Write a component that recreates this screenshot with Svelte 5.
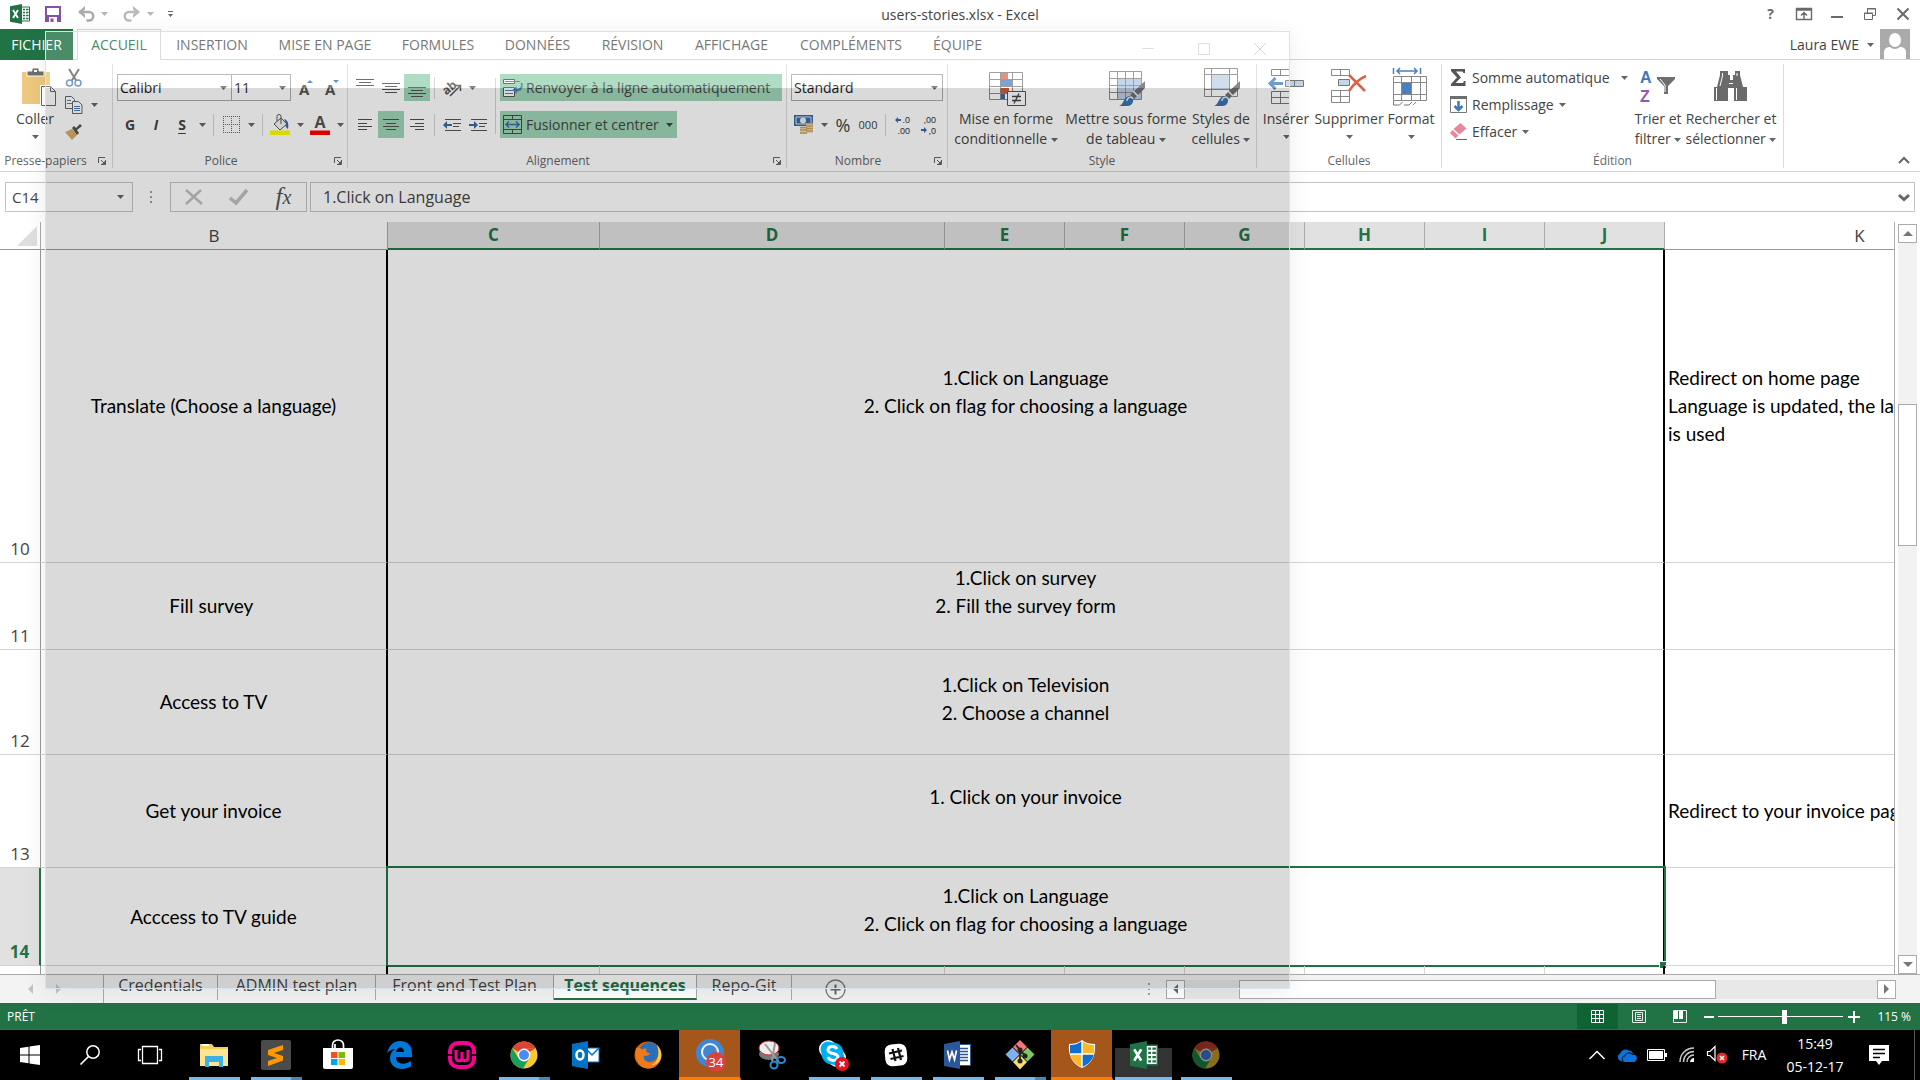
<script>
  const ribbonTabs = ['INSERTION', 'MISE EN PAGE', 'FORMULES', 'DONNÉES', 'RÉVISION', 'AFFICHAGE', 'COMPLÉMENTS', 'ÉQUIPE'];

  const columns = [
    { name: 'B', width: 347 },
    { name: 'C', width: 212, on: true },
    { name: 'D', width: 345, on: true },
    { name: 'E', width: 120, on: true },
    { name: 'F', width: 120, on: true },
    { name: 'G', width: 120, on: true },
    { name: 'H', width: 120, on: true },
    { name: 'I', width: 120, on: true },
    { name: 'J', width: 120, on: true },
    { name: 'K', width: 390 }
  ];

  const rows = [
    { n: 10, height: 313, b: 'Translate (Choose a language)', c: '1.Click on Language\n2. Click on flag for choosing a language\n\u00a0', k: 'Redirect on home page\nLanguage is updated, the language\nis used' },
    { n: 11, height: 87, b: 'Fill survey\u00a0', c: '1.Click on survey\n2. Fill the survey form\n\u00a0', k: '' },
    { n: 12, height: 105, b: 'Access to TV', c: '1.Click on Television\n2. Choose a channel', k: '' },
    { n: 13, height: 113, b: 'Get your invoice', c: '1. Click on your invoice\n\u00a0', k: 'Redirect to your invoice page' },
    { n: 14, height: 98, b: 'Acccess to TV guide', c: '1.Click on Language\n2. Click on flag for choosing a language', k: '', on: true }
  ];

  let fontName = $state('Calibri');
  let fontSize = $state('11');
  let numberFormat = $state('Standard');
  let cellName = $state('C14');
  let formula = $state('1.Click on Language');
  let zoom = $state(53);
</script>

{#snippet caret()}
  <svg class="caret" width="7" height="4" viewBox="0 0 7 4" aria-hidden="true"><path d="M0 0h7L3.5 4z" fill="currentColor" /></svg>
{/snippet}

{#snippet groupLabel(text, launcher)}
  <div class="group-label">
    <span>{text}</span>
    {#if launcher}
      <button class="launcher" aria-label={`Options ${text}`}>
        <svg width="8" height="8" viewBox="0 0 8 8"><path d="M.5 6V.5H7M3 3l3 3M7.500 3v4.500H3" fill="none" stroke="#666" /><path d="M7 4v3H4z" fill="#666" /></svg>
      </button>
    {/if}
  </div>
{/snippet}

{#snippet lines(a, b, c, d)}
  <svg width="18" height="18" viewBox="0 0 18 18" shape-rendering="crispEdges">
    {#each [a, b, c, d] as l}
      {#if l}<path d={`M${l[0]} ${l[2] + 0.5}H${l[1]}`} stroke="#505050" />{/if}
    {/each}
  </svg>
{/snippet}

{#snippet excelLogo(w, h)}
  <svg width={w} height={h} viewBox="0 0 20 20">
    <path d="M11 3h8.500v14H11" fill="#fff" stroke="#207245" />
    <path d="M13 5.500h2M13 8.500h2M13 11.500h2M13 14.500h2M16 5.500h2.500M16 8.500h2.500M16 11.500h2.500M16 14.500h2.500" stroke="#207245" stroke-width="1.600" />
    <path d="M0 2.300 12 0v20L0 17.700z" fill="#207245" />
    <path d="M3 6l5 8M8 6l-5 8" stroke="#fff" stroke-width="1.900" />
  </svg>
{/snippet}

{#snippet brush()}
  <path d="M36 13v7l-11 11-4-4z" fill="#6e6e6e" />
  <path d="M24 23l5 5" stroke="#f4f4f4" stroke-width="1.500" />
  <path d="M10 38c5-1 4-10 11-10 5 2 4 10-3 10z" fill="#3a74b4" />
  <path d="M18 33c0-4 5-5 6-2" stroke="#dce8f5" fill="none" stroke-width="1.500" />
{/snippet}

{#snippet chromeLogo()}
  <svg width="28" height="28" viewBox="0 0 28 28">
    <circle cx="14" cy="14" r="13.500" fill="#fbc62f" />
    <path d="M14 14 2.300 7.200A13.500 13.500 0 0 1 25.700 7.200H14z" fill="#dc4437" />
    <path d="M14 14 25.700 7.200H14z" fill="#dc4437" />
    <path d="M2.300 7.200A13.500 13.500 0 0 0 13 27.500L19.500 17 8.500 17z" fill="#1a9f5a" />
    <circle cx="14" cy="14" r="6.400" fill="#fff" />
    <circle cx="14" cy="14" r="5" fill="#4a8af4" />
  </svg>
{/snippet}

<div class="app">
  <header class="title-bar">
    <div class="quick">
      {@render excelLogo(20, 20)}
      <button aria-label="Enregistrer" class="save">
        <svg width="16" height="16" viewBox="0 0 16 16"><path d="M0 0h16v16H0z" fill="#8552a5" /><path d="M2 2h12v7H2zM4 11h8v5H4z" fill="#fff" /><path d="M5.500 12.500h3V16h-3z" fill="#8552a5" /></svg>
      </button>
      <button aria-label="Annuler" class="undo">
        <svg width="18" height="16" viewBox="0 0 18 16"><path d="M2 6h10a4 4 0 0 1 0 8.500H9.500" fill="none" stroke="#ababab" stroke-width="2.500" /><path d="M8 0 1 6l7 6V8.500L5 6l3-2.500z" fill="#ababab" /></svg>
        <span class="pale">{@render caret()}</span>
      </button>
      <button aria-label="Rétablir" class="undo">
        <svg width="18" height="16" viewBox="0 0 18 16"><path d="M16 6H6a4 4 0 0 0 0 8.500h2.500" fill="none" stroke="#bbb" stroke-width="2.500" /><path d="M10 0l7 6-7 6V8.500L13 6l-3-2.500z" fill="#bbb" /></svg>
        <span class="pale">{@render caret()}</span>
      </button>
      <button aria-label="Personnaliser" class="more"><svg width="5" height="6" viewBox="0 0 5 6"><path d="M0 0h5v1H0zM0 3h5L2.500 6z" fill="#666" /></svg></button>
    </div>
    <h1>users-stories.xlsx - Excel</h1>
    <div class="win-buttons">
      <button aria-label="Aide" class="help">?</button>
      <button aria-label="Options du ruban"><svg width="16" height="12" viewBox="0 0 16 12"><path d="M.5.5h15v11H.5zM0 2h16M8 11V5M5 7.500 8 4.500l3 3" fill="none" stroke="#6a6a6a" stroke-width="1.400" /></svg></button>
      <button aria-label="Réduire"><svg width="12" height="12" viewBox="0 0 12 12"><path d="M0 8h12v2H0z" fill="#6a6a6a" /></svg></button>
      <button aria-label="Restaurer"><svg width="12" height="12" viewBox="0 0 12 12"><path d="M.5 5.500h8v6h-8zM0 5h9M3.500 5V.500h8v7H9M3 1h9" fill="none" stroke="#6a6a6a" /></svg></button>
      <button aria-label="Fermer"><svg width="12" height="12" viewBox="0 0 12 12"><path d="M.5.500l11 11M11.500.500l-11 11" stroke="#6a6a6a" stroke-width="2" /></svg></button>
    </div>
  </header>

  <nav class="tabs" aria-label="Ruban">
    <button class="file">FICHIER</button>
    <button class="active">ACCUEIL</button>
    {#each ribbonTabs as t}<button>{t}</button>{/each}
    <div class="user">
      <button>Laura EWE {@render caret()}</button>
      <svg width="30" height="30" viewBox="0 0 30 30"><path d="M0 0h30v30H0z" fill="#aaa" /><ellipse cx="15" cy="11" rx="6" ry="7" fill="#fff" /><path d="M4 30v-6c0-4 2-6 6-6 3 2.500 7 2.500 10 0 4 0 6 2 6 6v6z" fill="#fff" /></svg>
    </div>
  </nav>

  <section class="ribbon">
    <div class="group clipboard">
      <div class="group-body">
        <button class="big paste">
          <svg width="36" height="40" viewBox="0 0 36 40"><path d="M0 4h28v32H0z" fill="#edc87e" /><path d="M5 8V3h5V0h7v3h5v5z" fill="#6e6e6e" stroke="#fff" /><path d="M12 2h3v2h-3z" fill="#fff" /><path d="M18 17h11l6 6v15H18z" fill="#fff" /><path d="M19.500 18.500h9l5 5v14h-14zM28.500 18.500v5h5" fill="#fff" stroke="#666" /></svg>
          <span>Coller</span>{@render caret()}
        </button>
        <div class="stack icons">
          <button aria-label="Couper"><svg width="18" height="18" viewBox="0 0 18 18"><path d="M4 0l7.500 12M14 0 6.500 12" stroke="#6a6a6a" stroke-width="2" /><circle cx="4.500" cy="14" r="3" fill="none" stroke="#5a86bd" stroke-width="1.500" /><circle cx="13" cy="14" r="3" fill="none" stroke="#5a86bd" stroke-width="1.500" /></svg></button>
          <button aria-label="Copier"><svg width="18" height="18" viewBox="0 0 18 18"><path d="M.500.500h6l3 3v9h-9z" fill="#fff" stroke="#666" /><path d="M2 4.500h4M2 7.500h5" stroke="#4a7cb8" /><path d="M7.500 5.500h6l3.500 3.500v8.500H7.500z" fill="#fff" stroke="#666" /><path d="M9 10.500h6M9 12.500h6M9 14.500h6" stroke="#4a7cb8" /></svg>{@render caret()}</button>
          <button aria-label="Reproduire la mise en forme"><svg width="18" height="16" viewBox="0 0 18 16"><path d="M0 8l7-3 5 6-5 5z" fill="#d6ac66" /><path d="M7 4l5 7 2-2-2-3 5-4-2-2-4 4-2-2z" fill="#555" /></svg></button>
        </div>
      </div>
      {@render groupLabel('Presse-papiers', true)}
    </div>

    <div class="group font">
      <div class="group-body rows">
        <div class="tool-row">
          <label class="combo name"><select aria-label="Police" bind:value={fontName}><option>Calibri</option><option>Arial</option></select>{@render caret()}</label>
          <label class="combo size"><select aria-label="Taille" bind:value={fontSize}><option>11</option><option>12</option></select>{@render caret()}</label>
          <button class="tool grow" aria-label="Agrandir la police"><svg width="14" height="16" viewBox="0 0 14 16"><text x="0" y="15" class="glyph">A</text><path d="M8 3l3-3 3 3z" fill="#4a7cb8" /></svg></button>
          <button class="tool" aria-label="Réduire la police"><svg width="14" height="16" viewBox="0 0 14 16"><text x="0" y="15" class="glyph">A</text><path d="M8 0h6l-3 3z" fill="#4a7cb8" /></svg></button>
        </div>
        <div class="tool-row">
          <button class="tool b">G</button>
          <button class="tool i">I</button>
          <button class="tool u">S</button>
          <button class="drop" aria-label="Soulignement">{@render caret()}</button>
          <i class="sep"></i>
          <button class="tool" aria-label="Bordures"><svg width="17" height="17" viewBox="0 0 17 17"><path d="M0 .5h17M0 8.500h17M.5 0v16M8.500 0v16M16.500 0v16" stroke="#666" stroke-dasharray="1 1" /><path d="M0 16.500h17" stroke="#666" stroke-dasharray="1 1" /></svg></button>
          <button class="drop" aria-label="Choix de bordures">{@render caret()}</button>
          <i class="sep"></i>
          <button class="tool" aria-label="Remplissage"><svg width="20" height="20" viewBox="0 0 20 20"><path d="M4 9l7-6 6 6-7 6z" fill="#f5f5f5" stroke="#555" /><path d="M7 6V1.500a2 2 0 0 1 4 0V9" fill="none" stroke="#555" /><path d="M14 4c4 1 5 5 4 10-2-1-3-3-2-6z" fill="#3a6ba8" /><path d="M0 15.500h20v4.500H0z" fill="#ff0" /></svg></button>
          <button class="drop" aria-label="Couleurs de remplissage">{@render caret()}</button>
          <button class="tool" aria-label="Couleur de police"><svg width="20" height="20" viewBox="0 0 20 20"><text x="10" y="13" text-anchor="middle" class="glyph big-a">A</text><path d="M0 15.500h20v4.500H0z" fill="#f00" /></svg></button>
          <button class="drop" aria-label="Couleurs de police">{@render caret()}</button>
        </div>
      </div>
      {@render groupLabel('Police', true)}
    </div>

    <div class="group align">
      <div class="group-body">
        <div class="rows">
          <div class="tool-row">
            <button class="tool" aria-label="Aligner en haut">{@render lines([0, 18, 0], [3, 15, 3], [0, 18, 6], null)}</button>
            <button class="tool" aria-label="Aligner au centre">{@render lines([0, 18, 4], [3, 15, 7], [0, 18, 10], [3, 15, 13])}</button>
            <button class="tool pressed" aria-label="Aligner en bas">{@render lines([0, 18, 8], [3, 15, 11], [0, 18, 14], [3, 15, 17])}</button>
            <i class="sep"></i>
            <button class="tool" aria-label="Orientation"><svg width="20" height="18" viewBox="0 0 20 18"><text x="0" y="13" class="glyph ab" transform="rotate(-40 7 9)">ab</text><path d="M8 17 18 7M13 6.500h5.500V12" fill="none" stroke="#555" stroke-width="1.500" /></svg></button>
            <button class="drop" aria-label="Orientations">{@render caret()}</button>
          </div>
          <div class="tool-row">
            <button class="tool" aria-label="Aligner à gauche">{@render lines([2, 16, 3], [2, 11, 7], [2, 16, 10], [2, 11, 13])}</button>
            <button class="tool pressed" aria-label="Centrer">{@render lines([1, 17, 3], [4, 14, 7], [1, 17, 10], [4, 14, 13])}</button>
            <button class="tool" aria-label="Aligner à droite">{@render lines([2, 16, 3], [7, 16, 7], [2, 16, 10], [7, 16, 13])}</button>
            <i class="sep"></i>
            <button class="tool" aria-label="Diminuer le retrait"><svg width="18" height="12" viewBox="0 0 18 12"><path d="M2 .5h16M10 4.500h8M10 7.500h6M2 11.500h16" stroke="#555" /><path d="M9 5H4V2L0 6l4 4V7h5z" fill="#3a6ba8" /></svg></button>
            <button class="tool" aria-label="Augmenter le retrait"><svg width="18" height="12" viewBox="0 0 18 12"><path d="M2 .5h16M10 4.500h8M10 7.500h6M2 11.500h16" stroke="#555" /><path d="M0 5h5V2l4 4-4 4V7H0z" fill="#3a6ba8" /></svg></button>
          </div>
        </div>
        <i class="sep tall"></i>
        <div class="rows">
          <button class="wrap pressed"><svg width="20" height="18" viewBox="0 0 20 18"><path d="M.500.500h11v4H.500zM.500 8.500h11v9H.500z" fill="#fff" stroke="#555" /><path d="M2 2.500h15M2 11.500h8M2 14.500h8" stroke="#4a7cb8" /><path d="M17.500 4c1.500 4-1 6-4 6V7l-4 4 4 4v-2.500c5 0 7-4 6-8.500z" fill="#4a7cb8" /></svg>Renvoyer à la ligne automatiquement</button>
          <button class="merge pressed"><svg width="20" height="20" viewBox="0 0 20 20"><path d="M.500.500h18v18H.500zM0 4.500h19M0 14.500h19M9.500 0v4M9.500 15v4" fill="none" stroke="#4d4d4d" /><path d="M4 9.500h11M6 6.500l-3 3 3 3M13 6.500l3 3-3 3" fill="none" stroke="#3a6ba8" stroke-width="1.600" /></svg>Fusionner et centrer{@render caret()}</button>
        </div>
      </div>
      {@render groupLabel('Alignement', true)}
    </div>

    <div class="group number">
      <div class="group-body rows">
        <label class="combo format"><select aria-label="Format de nombre" bind:value={numberFormat}><option>Standard</option><option>Nombre</option></select>{@render caret()}</label>
        <div class="tool-row">
          <button class="tool" aria-label="Format comptabilité"><svg width="20" height="19" viewBox="0 0 20 19"><path d="M0 0h19v11H0z" fill="#3a6ba8" /><path d="M2 2h15v7H2z" fill="none" stroke="#dfe8f3" /><circle cx="9" cy="5.500" r="3" fill="#e8eef6" /><path d="M12 8h7v10h-7zM6 12h7v7H6z" fill="#e9e0cf" /><path d="M12 8.500h7M12 11h7M12 13.500h7M12 16h7M6 12.500h7M6 15h7M6 18h7" stroke="#cfa35a" stroke-width="1.600" /></svg></button>
          <button class="drop" aria-label="Devises">{@render caret()}</button>
          <button class="tool pct">%</button>
          <button class="tool tiny">000</button>
          <i class="sep"></i>
          <button class="tool" aria-label="Ajouter une décimale"><svg width="16" height="18" viewBox="0 0 16 18"><path d="M6 3H3V1L0 4l3 3V5h3z" fill="#3a6ba8" /><text x="15" y="7" text-anchor="end" class="digits">.0</text><text x="15" y="18" text-anchor="end" class="digits">.00</text></svg></button>
          <button class="tool" aria-label="Réduire les décimales"><svg width="16" height="18" viewBox="0 0 16 18"><path d="M0 13h3v-2l3 3-3 3v-2H0z" fill="#3a6ba8" /><text x="15" y="7" text-anchor="end" class="digits">,00</text><text x="15" y="18" text-anchor="end" class="digits">,0</text></svg></button>
        </div>
      </div>
      {@render groupLabel('Nombre', true)}
    </div>

    <div class="group style">
      <div class="group-body">
        <button class="big cond">
          <svg width="38" height="40" viewBox="0 0 38 40"><path d="M.500 4.500h33v27h-33z" fill="#fff" /><path d="M11 5h8v6h-8z" fill="#e07b5d" /><path d="M11 12h12v6H11z" fill="#5f8fc8" /><path d="M11 20h9v6h-9z" fill="#cf5b3b" /><path d="M11 26h5v6h-5z" fill="#3a6ba8" /><path d="M.500 4.500h33v27h-33zM11.500 4v28M23.500 4v28M0 11.500h34M0 18.500h34M0 25.500h34" fill="none" stroke="#8a8a8a" /><path d="M18.500 23.500h18v14h-18z" fill="#fff" stroke="#555" /><path d="M23 28.500h9M23 32.500h9M30 25.500l-5 10" stroke="#444" stroke-width="1.300" /></svg>
          <span>Mise en forme</span><span>conditionnelle {@render caret()}</span>
        </button>
        <button class="big table">
          <svg width="38" height="40" viewBox="0 0 38 40"><path d="M.500 3.500h32v28h-32z" fill="#fff" /><path d="M8 10h24v21H8z" fill="#b9cde6" /><path d="M.500 3.500h32v28h-32zM8.500 3v28M16.500 3v28M24.500 3v28M0 10.500h33M0 17.500h33M0 24.500h33" fill="none" stroke="#8a8a8a" />{@render brush()}</svg>
          <span>Mettre sous forme</span><span>de tableau {@render caret()}</span>
        </button>
        <button class="big cell-styles">
          <svg width="38" height="40" viewBox="0 0 38 40"><path d="M.500.500h33v28h-33z" fill="#fff" /><path d="M8 7h18v14H8z" fill="#c6d6ea" /><path d="M.500.500h33v28h-33zM7.500 0v28M25.500 0v28M0 6.500h33M0 21.500h33" fill="none" stroke="#8a8a8a" />{@render brush()}</svg>
          <span>Styles de</span><span>cellules {@render caret()}</span>
        </button>
      </div>
      {@render groupLabel('Style', false)}
    </div>

    <div class="group cells">
      <div class="group-body">
        <button class="big insert">
          <svg width="36" height="40" viewBox="0 0 36 40"><path d="M3.500 1.500h18v6h-18zM12.500 1.500v6M3.500 23.500h18v12h-18zM12.500 23.500v12M3.500 29.500h18" fill="#fff" stroke="#777" /><path d="M17.500 12.500h18v6h-18zM26.500 12v7" fill="#c6d6ea" stroke="#777" /><path d="M15 15.500H2M7.500 10 2 15.500 7.500 21" fill="none" stroke="#4f86c6" stroke-width="3" /></svg>
          <span>Insérer</span>{@render caret()}
        </button>
        <button class="big delete">
          <svg width="36" height="40" viewBox="0 0 36 40"><path d="M.500 1.500h18v6H.500zM9.500 1.500v6M.500 22.500h18v12H.500zM9.500 22.500v12M.500 28.500h18" fill="#fff" stroke="#888" /><path d="M7.500 11.500h11v6h-11z" fill="#c6d6ea" stroke="#777" /><path d="M18 7l16 16M35 8c-7 3-13 9-17 15" stroke="#dc6141" stroke-width="2.500" fill="none" /></svg>
          <span>Supprimer</span>{@render caret()}
        </button>
        <button class="big fmt">
          <svg width="36" height="40" viewBox="0 0 36 40"><path d="M.500 0v6M27.500 0v6M4 3h20M7 0 4 3l3 3M21 0l3 3-3 3" fill="none" stroke="#4a7fbf" stroke-width="1.500" /><path d="M.500 8.500h33v24h-33zM8.500 8v24M18.500 8v24M27.500 8v24M0 14.500h33M0 26.500h33" fill="#fff" stroke="#888" /><path d="M9 15h9v11H9z" fill="#4a7fbf" /><path d="M.500 33v4h6l3-3M11 37h5l3-3M20 37l3-3" fill="none" stroke="#777" /></svg>
          <span>Format</span>{@render caret()}
        </button>
      </div>
      {@render groupLabel('Cellules', false)}
    </div>

    <div class="group edit">
      <div class="group-body">
        <div class="stack texts">
          <button class="sum"><svg width="17" height="17" viewBox="0 0 17 17"><path d="M1 0h14v4h-1.500L12.500 2.500H6L11 8.500 5.500 14h7.500l1-2h1.500v5H1v-2l6-6.500L1 2z" fill="#555" /></svg><span>Somme automatique</span>{@render caret()}</button>
          <button><svg width="17" height="17" viewBox="0 0 17 17"><path d="M.500.500h16v16H.500z" fill="#fff" stroke="#777" /><path d="M0 0h17v3H0z" fill="#6e6e6e" /><path d="M8.500 5v9M4.500 10l4 4 4-4" fill="none" stroke="#3f78ba" stroke-width="2.500" /></svg><span>Remplissage</span>{@render caret()}</button>
          <button><svg width="17" height="17" viewBox="0 0 17 17"><path d="M10.500 0l6 5.500-7 6-6-5.500z" fill="#e8879a" /><path d="M2.500 7l6 5.500-3 3L0 10z" fill="#e8879a" /><path d="M6 16.500h11" stroke="#666" /></svg><span>Effacer</span>{@render caret()}</button>
        </div>
        <button class="big sort">
          <svg width="36" height="40" viewBox="0 0 36 40"><text x="0" y="15" class="az a">A</text><text x="0" y="34" class="az z">Z</text><path d="M17 9h18v2l-7 7v8h-4v-8l-7-7z" fill="#6e6e6e" /><path d="M20 11l5 6v7" stroke="#fff" fill="none" /></svg>
          <span>Trier et</span><span>filtrer {@render caret()}</span>
        </button>
        <button class="big find">
          <svg width="36" height="40" viewBox="0 0 36 40"><path d="M10 3h5v4h2v5h3V7h2V3h5v4l3 12h4v14H21V20h-6v13H1V19h3L7 7V3z" fill="#6a6a6a" /><path d="M16 15.500h4M9.500 5v3L7 18M24 5v3M3.500 20v12M23.500 20v12" stroke="#fff" fill="none" /></svg>
          <span>Rechercher et</span><span>sélectionner {@render caret()}</span>
        </button>
      </div>
      {@render groupLabel('Édition', false)}
    </div>
    <button class="collapse" aria-label="Réduire le ruban"><svg width="12" height="8" viewBox="0 0 12 8"><path d="M1 7l5-5 5 5" fill="none" stroke="#666" stroke-width="2" /></svg></button>
  </section>

  <section class="formula-bar">
    <label class="name-box"><input aria-label="Zone Nom" bind:value={cellName} />{@render caret()}</label>
    <i class="dots"></i>
    <div class="fx-box">
      <button aria-label="Annuler la saisie"><svg width="18" height="16" viewBox="0 0 18 16"><path d="M1 1l16 14M16 1 1 15" stroke="#c0c0c0" stroke-width="2.500" /></svg></button>
      <button aria-label="Entrer"><svg width="19" height="16" viewBox="0 0 19 16"><path d="M1 9l6 5L18 1" fill="none" stroke="#c0c0c0" stroke-width="3.500" /></svg></button>
      <button class="fx" aria-label="Insérer une fonction"><i>f</i><i class="x">x</i></button>
    </div>
    <label class="formula"><input aria-label="Barre de formule" bind:value={formula} /><svg width="12" height="9" viewBox="0 0 12 9"><path d="M1 2l5 4.500L11 2" fill="none" stroke="#666" stroke-width="3" /></svg></label>
  </section>

  <main class="sheet">
    <div class="grid-view">
      <table>
        <colgroup>
          <col class="row-head-col" />
          {#each columns as c}<col style:width={`${c.width}px`} />{/each}
        </colgroup>
        <thead>
          <tr>
            <th class="corner"><svg width="20" height="20" viewBox="0 0 20 20"><path d="M20 0v20H0z" fill="#dfdfdf" /></svg></th>
            {#each columns as c}<th scope="col" class:on={c.on}>{c.name}</th>{/each}
          </tr>
        </thead>
        <tbody>
          {#each rows as r}
            <tr style:height={`${r.height}px`}>
              <th scope="row" class:on={r.on}>{r.n}</th>
              <td class="left">{r.b}</td>
              <td class="merged" class:selected={r.on} colspan="8">{r.c}</td>
              <td class="result">{r.k}</td>
            </tr>
          {/each}
          <tr class="next">
            <th scope="row"></th>
            <td class="left"></td>
            <td></td><td></td><td></td><td></td><td></td><td></td><td></td><td class="edge"></td>
            <td></td>
          </tr>
        </tbody>
      </table>
    </div>
    <div class="v-scroll">
      <button aria-label="Défiler vers le haut"><svg width="10" height="5" viewBox="0 0 10 5"><path d="M5 0l5 5H0z" fill="#777" /></svg></button>
      <div class="v-track"><div class="v-thumb"></div></div>
      <button aria-label="Défiler vers le bas"><svg width="10" height="5" viewBox="0 0 10 5"><path d="M0 0h10L5 5z" fill="#777" /></svg></button>
    </div>
  </main>

  <nav class="sheet-tabs" aria-label="Feuilles">
    <div class="arrows">
      <svg width="5" height="10" viewBox="0 0 5 10"><path d="M5 0v10L0 5z" fill="#c4c4c4" /></svg>
      <svg width="5" height="10" viewBox="0 0 5 10"><path d="M0 0v10l5-5z" fill="#c4c4c4" /></svg>
    </div>
    <button class="s1">Credentials</button>
    <button class="s2">ADMIN test plan</button>
    <button class="s3">Front end Test Plan</button>
    <button class="s4 current">Test sequences</button>
    <button class="s5">Repo-Git</button>
    <button class="add" aria-label="Nouvelle feuille"><svg width="21" height="21" viewBox="0 0 21 21"><circle cx="10.500" cy="10.500" r="9.500" fill="none" stroke="#777" stroke-width="1.300" /><path d="M10.500 5.500v10M5.500 10.500h10" stroke="#666" stroke-width="2" /></svg></button>
    <i class="dots"></i>
    <div class="h-scroll">
      <button aria-label="Défiler à gauche"><svg width="5" height="10" viewBox="0 0 5 10"><path d="M5 0v10L0 5z" fill="#666" /></svg></button>
      <div class="h-track"><div class="h-thumb"></div></div>
      <button aria-label="Défiler à droite"><svg width="5" height="10" viewBox="0 0 5 10"><path d="M0 0v10l5-5z" fill="#777" /></svg></button>
    </div>
  </nav>

  <footer class="status">
    <span class="ready">PRÊT</span>
    <button class="view current-view" aria-label="Normal"><svg width="13" height="13" viewBox="0 0 13 13"><path d="M.500.500h12v12H.500zM4.500 0v13M8.500 0v13M0 4.500h13M0 8.500h13" fill="none" stroke="#fff" /></svg></button>
    <button class="view" aria-label="Mise en page"><svg width="14" height="13" viewBox="0 0 14 13"><path d="M.500.500h13v12H.500zM3.500 2.500h7v8h-7zM5 4.500h4M5 6.500h4M5 8.500h4" fill="none" stroke="#e2efe7" /></svg></button>
    <button class="view" aria-label="Avec sauts de page"><svg width="14" height="13" viewBox="0 0 14 13"><path d="M.500.500h13v12H.500z" fill="none" stroke="#e2efe7" /><path d="M1 1h4v8H1zM6 1h4v8H6z" fill="#fff" /></svg></button>
    <button class="zoom-btn" aria-label="Zoom arrière"><svg width="10" height="10" viewBox="0 0 10 10"><path d="M0 4h10v2H0z" fill="#fff" /></svg></button>
    <input type="range" min="0" max="100" aria-label="Zoom" bind:value={zoom} />
    <button class="zoom-btn" aria-label="Zoom avant"><svg width="12" height="12" viewBox="0 0 12 12"><path d="M0 5h12v2H0zM5 0h2v12H5z" fill="#fff" /></svg></button>
    <span class="percent">115 %</span>
  </footer>

  <footer class="taskbar">
    <button class="sys" aria-label="Démarrer"><svg width="20" height="20" viewBox="0 0 20 20"><path d="M0 3l8.500-1.200v7.700H0zM9.500 1.600 20 0v9.500H9.500zM0 10.500h8.500v7.700L0 17zM9.500 10.500H20V20L9.500 18.400z" fill="#fff" /></svg></button>
    <button class="sys" aria-label="Rechercher"><svg width="20" height="20" viewBox="0 0 20 20"><circle cx="13" cy="7" r="6.200" fill="none" stroke="#fff" stroke-width="1.500" /><path d="M8.500 11.500.500 19.500" stroke="#fff" stroke-width="1.700" /></svg></button>
    <button class="sys" aria-label="Vue des tâches"><svg width="24" height="18" viewBox="0 0 24 18"><path d="M4.500.500h15v17h-15zM3 3.500H.500v11H3M21 3.500h2.500v11H21" fill="none" stroke="#fff" stroke-width="1.300" /></svg></button>
    <div class="apps">
      <button class="run" aria-label="Explorateur"><svg width="28" height="24" viewBox="0 0 28 24"><path d="M0 1h12l2 3h14v19H0z" fill="#f5cd5b" /><path d="M0 6h28v17H0z" fill="#fde493" /><path d="M2 1h7v2H2z" fill="#fff" /><path d="M5 13h18v11h-4v-5h-10v5H5z" fill="#3bb0e5" /></svg></button>
      <button class="run more-than-one" aria-label="Sublime Text"><svg width="30" height="30" viewBox="0 0 30 30"><rect width="30" height="30" rx="2" fill="#4b4b4b" /><path d="M7 10l15-5v5l-9 3 9 3v4.500L7 26v-5l9-3-9-3z" fill="#ff9800" /></svg></button>
      <button aria-label="Store"><svg width="30" height="30" viewBox="0 0 30 30"><path d="M9.500 9V5a5.500 5 0 0 1 11 0v4M12 8V4" fill="none" stroke="#fff" stroke-width="1.700" /><path d="M0 8h30v19a2 2 0 0 1-2 2H2a2 2 0 0 1-2-2z" fill="#fff" /><path d="M8 12h6.500v6H8z" fill="#f25022" /><path d="M15.500 12H22v6h-6.500z" fill="#7fba00" /><path d="M8 19h6.500v6H8z" fill="#00a4ef" /><path d="M15.500 19H22v6h-6.500z" fill="#ffb900" /></svg></button>
      <button aria-label="Edge"><svg width="26" height="28" viewBox="0 0 26 28"><path d="M0 12C2 4 7 0 13 0c8 0 12 5 12 12v4H9c0 8 9 8 15 4v5.500C14 31 3 27 3 17c0-4 2-7 5-9-3 0-6 2-8 4zm9-1h8c0-6-7-6-8 0z" fill="#0078d7" /></svg></button>
      <button aria-label="Wamp"><svg width="28" height="28" viewBox="0 0 28 28"><rect x="2" y="2" width="24" height="24" rx="8" fill="none" stroke="#f90093" stroke-width="4" /><path d="M0 14h28" stroke="#000" stroke-width="1.500" /><path d="M8 9v7c0 5 6 5 6 0v-5 5c0 5 6 5 6 0V9" fill="none" stroke="#f90093" stroke-width="3" /></svg></button>
      <button class="run more-than-one" aria-label="Chrome">{@render chromeLogo()}</button>
      <button aria-label="Outlook"><svg width="28" height="28" viewBox="0 0 28 28"><path d="M14 7h13v14H14z" fill="#fff" stroke="#0072c6" /><path d="M14 8l6 6 7-7" fill="none" stroke="#0072c6" stroke-width="1.500" /><path d="M0 3 16 0v28L0 25z" fill="#0072c6" /><ellipse cx="8" cy="14" rx="3.500" ry="4.500" fill="none" stroke="#fff" stroke-width="2.500" /></svg></button>
      <button aria-label="Firefox"><svg width="28" height="28" viewBox="0 0 28 28"><circle cx="14" cy="14" r="13.500" fill="#e66000" /><circle cx="15" cy="11" r="10" fill="#2a6fb8" /><path d="M2 7C0 18 5 27 14 27.500c9 0 14-8 13-16-1 6-5 10-10 10-6 0-8-4-7-7 2 1 5 0 6-2-4-1-5-3-3-5-3 0-4 0-5 1-1-2-4-2-6-1.500z" fill="#ee7a1c" /><path d="M23 4c4 4 5 9 4 13-2 5-5 7-9 7 6-4 8-11 5-20z" fill="#ffcb3a" /></svg></button>
      <button class="alert" aria-label="Messagerie"><svg width="28" height="30" viewBox="0 0 28 30"><circle cx="14" cy="14" r="14" fill="#3f87d3" /><circle cx="14" cy="13" r="8" fill="none" stroke="#eaf2fb" stroke-width="2" /></svg><span class="count">34</span></button>
      <button aria-label="Outil Capture"><svg width="28" height="30" viewBox="0 0 28 30"><ellipse cx="11" cy="14" rx="10" ry="6" fill="#777" /><ellipse cx="11" cy="8" rx="10" ry="7" fill="#eee" stroke="#c33" /><path d="M7 4l14 18M17 3l-3 18" stroke="#999" stroke-width="2" /><circle cx="16" cy="25" r="3.500" fill="none" stroke="#2e8ad0" stroke-width="2" /><ellipse cx="23" cy="20" rx="4" ry="3" fill="none" stroke="#2e8ad0" stroke-width="2" /></svg></button>
      <button class="run" aria-label="Skype"><svg width="30" height="31" viewBox="0 0 30 31"><circle cx="9" cy="9" r="9" fill="#fff" /><circle cx="18" cy="18" r="9" fill="#fff" /><circle cx="9" cy="9" r="7.500" fill="#00aff0" /><circle cx="18" cy="18" r="7.500" fill="#00aff0" /><circle cx="13.500" cy="13.500" r="11" fill="#00aff0" /><path d="M18 9c-2-4-9-3-9 1 0 5 10 2 10 7 0 4-8 5-10 0" fill="none" stroke="#fff" stroke-width="3" /><circle cx="23" cy="24" r="7" fill="#e81123" /><path d="M20.500 21.500l5 5M25.500 21.500l-5 5" stroke="#fff" stroke-width="1.800" /></svg></button>
      <button class="run" aria-label="Slack"><svg width="24" height="24" viewBox="0 0 24 24"><rect x="1" y="1" width="22" height="22" rx="7" fill="#fff" transform="rotate(-5 12 12)" /><path d="M8.500 6l3 12M14 5l3 12M5 10.500 18 7.500M6.500 16l13-3" stroke="#111" stroke-width="2.200" /></svg></button>
      <button class="run" aria-label="Word"><svg width="28" height="28" viewBox="0 0 28 28"><path d="M14 3.500h12.500v21H14z" fill="#fff" stroke="#2b579a" /><path d="M15 7.500h9M15 10.500h9M15 13.500h9M15 16.500h9M15 19.500h9" stroke="#2b579a" stroke-width="1.500" /><path d="M0 3 16 0v28L0 25z" fill="#2b579a" /><path d="M3.500 9.500l2 9L8 11l2.500 7.500 2-9" fill="none" stroke="#fff" stroke-width="1.700" /></svg></button>
      <button class="run more-than-one" aria-label="Git"><svg width="30" height="30" viewBox="0 0 30 30"><path d="M15 0l7 7-7 7-7-7z" fill="#f07878" /><path d="M7.500 7.500l7 7-7 7-7-7z" fill="#7fb0f0" /><path d="M22.500 7.500l7 7-7 7-7-7z" fill="#80c860" /><path d="M15 15l7 7-7 7.500-7-7.500z" fill="#f7dc6f" /><path d="M11 5l4 5v12M15 11l5 4" stroke="#222" stroke-width="1.800" fill="none" /><circle cx="15" cy="10" r="2.500" fill="#222" /><circle cx="20" cy="16" r="2.500" fill="#222" /><circle cx="15" cy="21" r="2.500" fill="#222" /></svg></button>
      <button class="alert" aria-label="Sécurité"><svg width="28" height="28" viewBox="0 0 28 28"><path d="M14 0c4 3 8 4 13 4 1 11-3 20-13 24C4 24 0 15 1 4c5 0 9-1 13-4z" fill="#fff" /><path d="M13.300 1.500v11.800H2V5c4 0 8-1 11.300-3.500zM14.700 14.700h11c-1 5-5 9.500-11 12z" fill="#0f6fd0" /><path d="M14.700 1.500C18 4 22 5 26 5v8.300H14.700zM2.300 14.700h11v12c-6-2.500-10-7-11-12z" fill="#fbb829" /></svg></button>
      <button class="front" aria-label="Excel">{@render excelLogo(28, 28)}</button>
      <button class="run dim" aria-label="Chrome 2">{@render chromeLogo()}</button>
    </div>
    <div class="tray">
      <button aria-label="Icônes cachées"><svg width="16" height="10" viewBox="0 0 16 10"><path d="M.500 9 8 1.500 15.500 9" fill="none" stroke="#fff" stroke-width="1.500" /></svg></button>
      <button aria-label="OneDrive"><svg width="20" height="13" viewBox="0 0 20 13"><path d="M4 12a4 4 0 0 1-1-7.500C4 1 9-1 12 1.500c2 0 4 1.500 4 4 5 0 5 6.500 1 7.500H8z" fill="#0a72d8" /><path d="M6 12c-2-3 0-5 2-5 1-4 6-4 8-1" fill="none" stroke="#000" /></svg></button>
      <button aria-label="Batterie"><svg width="20" height="12" viewBox="0 0 20 12"><path d="M.500.500h17v11H.500z" fill="none" stroke="#fff" /><path d="M2 2h14v8H2zM18 4h2v4h-2z" fill="#fff" /></svg></button>
      <button aria-label="Wi-Fi"><svg width="16" height="16" viewBox="0 0 16 16"><path d="M1 15C1 7 7 1 15 1M4.500 15C4.500 9 9 4.500 15 4.500M8 15c0-4 3-7 7-7" fill="none" stroke="#ccc" stroke-width="1.400" /><path d="M11 15c0-2 2-4 4-4v4z" fill="#fff" /></svg></button>
      <button aria-label="Volume"><svg width="21" height="18" viewBox="0 0 21 18"><path d="M.500 5.500H3l5-5v14l-5-5H.500z" fill="none" stroke="#fff" stroke-width="1.200" /><circle cx="15" cy="12" r="5.500" fill="#e02b2b" /><path d="M13 10l4 4M17 10l-4 4" stroke="#fff" stroke-width="1.500" /></svg></button>
      <button class="lang">FRA</button>
      <button class="clock"><span>15:49</span><span>05-12-17</span></button>
      <button class="notes" aria-label="Centre de notifications"><svg width="20" height="20" viewBox="0 0 20 20"><path d="M0 0h20v16h-7l-3 4-3-4H0z" fill="#fff" /><path d="M4 4.500h12M4 8.500h12M4 12.500h7" stroke="#000" stroke-width="1.300" /></svg></button>
    </div>
  </footer>

  <div class="ghost-window" aria-hidden="true">
    <div class="ghost-title">
      <svg width="12" height="12" viewBox="0 0 12 12"><path d="M0 5.500h12" stroke="#dedede" /></svg>
      <svg width="12" height="12" viewBox="0 0 12 12"><path d="M.500.500h11v11H.500z" fill="none" stroke="#dedede" /></svg>
      <svg width="12" height="12" viewBox="0 0 12 12"><path d="M0 0l12 12M12 0 0 12" stroke="#d4d4d4" /></svg>
    </div>
    <div class="ghost-body"></div>
  </div>
</div>

<style>
  :global(body) {
    margin: 0;
    overflow: hidden;
  }
  .app {
    position: relative;
    display: flex;
    flex-direction: column;
    height: 100vh;
    background: #fff;
    color: #444;
    font: 14px/20px 'Open Sans', 'Noto Sans', sans-serif;
    overflow: hidden;
  }
  .app * {
    box-sizing: border-box;
  }
  button {
    display: flex;
    align-items: center;
    justify-content: center;
    margin: 0;
    padding: 0;
    border: 0;
    background: none;
    color: inherit;
    font: inherit;
    white-space: nowrap;
  }
  svg {
    display: block;
    flex: none;
    overflow: visible;
  }
  .caret {
    display: inline-block;
    vertical-align: middle;
    color: #666;
  }

  /* Title bar */
  .title-bar {
    display: grid;
    grid-template-columns: 1fr auto 1fr;
    height: 29px;
    flex: none;
  }
  h1 {
    margin: 0;
    font: 14px/30px 'Open Sans', 'Noto Sans', sans-serif;
  }
  .quick {
    display: flex;
    align-items: center;
    padding: 0 0 3px 10px;
  }
  .save {
    margin-left: 15px;
  }
  .undo {
    width: 46px;
    gap: 6px;
  }
  .save + .undo {
    margin-left: 8px;
  }
  .pale .caret {
    color: #b5b5b5;
    display: block;
  }
  .more {
    width: 18px;
  }
  .win-buttons {
    display: flex;
    justify-content: flex-end;
    padding: 0 1px 3px 0;
  }
  .win-buttons button {
    width: 33px;
  }
  .help {
    font-weight: 700;
    color: #6a6a6a;
  }

  /* Ribbon tabs */
  .tabs {
    display: grid;
    grid-template-columns: 73px 88px 102px 124px 102px 97px 93px 105px 134px 79px 1fr;
    height: 31px;
    flex: none;
    border-bottom: 1px solid #d4d4d4;
    color: #5a5a5a;
  }
  .tabs .file {
    background: #217346;
    color: #fff;
  }
  .tabs .active {
    height: 31px;
    margin-left: 4px;
    border: 1px solid #d4d4d4;
    border-bottom: 0;
    background: #fff;
    color: #217346;
  }
  .user {
    display: flex;
    justify-content: flex-end;
    gap: 6px;
    padding-right: 10px;
    color: #444;
  }
  .user button {
    gap: 8px;
  }

  /* Ribbon */
  .ribbon {
    display: flex;
    height: 112px;
    flex: none;
    padding: 4px 0 3px;
    border-bottom: 1px solid #d4d4d4;
  }
  .group {
    display: flex;
    flex-direction: column;
    flex: none;
    border-right: 1px solid #dcdcdc;
  }
  .group-body {
    display: flex;
    flex: none;
    height: 90px;
  }
  .group-label {
    display: grid;
    grid-template-columns: 1fr auto;
    align-items: center;
    height: 14px;
    color: #666;
    font-size: 12px;
    line-height: 14px;
    text-align: center;
  }
  .launcher {
    width: 18px;
    height: 14px;
  }
  .clipboard { width: 113px; }
  .clipboard .launcher { width: 21px; }
  .font { width: 235px; }
  .align { width: 439px; }
  .number { width: 161px; }
  .style { width: 309px; }
  .cells { width: 185px; }
  .edit { width: 342px; }

  .big {
    flex-direction: column;
    justify-content: flex-start;
    padding-top: 4px;
  }
  .big span {
    line-height: 20px;
  }
  .big > svg:first-child {
    margin-bottom: 1px;
  }
  .big > .caret {
    margin-top: 6px;
  }
  .paste { width: 62px; padding-left: 8px; }
  .paste > svg:first-child { margin-left: 10px; }
  .stack {
    display: flex;
    flex-direction: column;
    align-items: flex-start;
  }
  .icons button {
    height: 27px;
    gap: 8px;
    padding-left: 3px;
  }
  .stack.texts {
    width: 190px;
    padding-left: 8px;
  }
  .texts button {
    height: 27px;
    gap: 5px;
  }
  .sum .caret {
    margin-left: 6px;
  }
  .rows {
    display: flex;
    flex-direction: column;
    gap: 10px;
    padding-top: 10px;
  }
  .tool-row {
    display: flex;
    height: 27px;
    align-items: center;
  }
  .font .group-body,
  .number .group-body,
  .align .group-body {
    padding-left: 4px;
  }
  .combo {
    display: flex;
    align-items: center;
    height: 27px;
    border: 1px solid #ababab;
    background: #fff;
    padding-right: 4px;
  }
  .combo select {
    flex: 1;
    min-width: 0;
    padding: 0 0 0 2px;
    border: 0;
    appearance: none;
    background: none;
    color: #111;
    font: inherit;
  }
  .combo.name { width: 115px; }
  .combo.size { width: 60px; margin-left: -1px; }
  .combo.format { width: 152px; }
  .tool {
    width: 26px;
    height: 27px;
  }
  .grow {
    margin-left: 2px;
  }
  .drop {
    width: 14px;
    height: 27px;
  }
  .tool.b { font-weight: 700; }
  .tool.i { font-weight: 700; font-style: italic; }
  .tool.u { font-weight: 700; text-decoration: underline; text-underline-offset: 3px; }
  .tool.pct { width: 24px; font-size: 18px; }
  .tool.tiny { font-size: 11px; }
  .sep {
    width: 1px;
    height: 22px;
    margin: 0 4px;
    background: #d4d4d4;
  }
  .sep.tall {
    height: 56px;
    margin: 14px 4px 0 0;
  }
  .align .rows:first-child {
    width: 143px;
  }
  .pressed {
    background: #9fd5b7;
  }
  .wrap,
  .merge {
    width: 282px;
    height: 27px;
    gap: 3px;
    justify-content: flex-start;
    padding-left: 3px;
  }
  .merge {
    width: 177px;
  }
  .merge .caret {
    margin-left: 4px;
    color: #444;
  }
  .cond { width: 116px; }
  .table { width: 124px; }
  .cell-styles { width: 66px; }
  .cond > svg:first-child,
  .table > svg:first-child,
  .cell-styles > svg:first-child {
    margin-left: 4px;
  }
  .insert { width: 58px; }
  .delete { width: 68px; }
  .fmt { width: 56px; }
  .sort { width: 52px; }
  .find { width: 94px; }
  .glyph {
    font: 700 15px 'Open Sans', sans-serif;
    fill: #555;
  }
  .big-a { font-size: 16px; }
  .ab { font-size: 12px; }
  .digits {
    font: 9px 'Liberation Sans', sans-serif;
    fill: #333;
  }
  .az { font: 700 16px 'Liberation Sans', sans-serif; }
  .a { fill: #3f78ba; }
  .z { fill: #9058b5; }
  .collapse {
    align-self: flex-end;
    width: 24px;
    height: 16px;
    margin: 0 4px 0 auto;
  }

  /* Formula bar */
  .formula-bar {
    display: flex;
    align-items: center;
    height: 50px;
    flex: none;
    padding: 0 5px;
    font-size: 16px;
  }
  .name-box,
  .fx-box,
  .formula {
    display: flex;
    align-items: center;
    height: 30px;
    border: 1px solid #c4c4c4;
  }
  .name-box {
    width: 128px;
    padding: 0 8px 0 6px;
  }
  .formula {
    flex: 1;
    margin-left: 3px;
    padding: 0 4px 0 12px;
  }
  .fx-box {
    width: 137px;
  }
  .fx-box button {
    flex: 1;
  }
  .fx {
    font: italic 25px/28px 'Liberation Serif', serif;
    color: #555;
  }
  .fx .x {
    font-size: 20px;
  }
  .formula-bar input {
    flex: 1;
    min-width: 0;
    padding: 0;
    border: 0;
    background: none;
    color: #444;
    font: inherit;
    outline: none;
  }
  .formula-bar .name-box input {
    font-size: 15px;
  }
  .dots {
    width: 2px;
    height: 12px;
    margin: 0 18px 0 17px;
    background: repeating-linear-gradient(#a0a0a0 0 2px, transparent 2px 5px);
  }

  /* Grid */
  .sheet {
    display: flex;
    flex: 1;
    min-height: 0;
  }
  .grid-view {
    flex: 1;
    min-width: 0;
    overflow: hidden;
    border-right: 1px solid #ababab;
  }
  table {
    width: 2055px;
    table-layout: fixed;
    border-collapse: separate;
    border-spacing: 0;
    color: #000;
    font: 19px/28px Lato, 'Open Sans', sans-serif;
    font-variant-ligatures: none;
  }
  .row-head-col {
    width: 41px;
  }
  thead th {
    height: 28px;
    padding: 0;
    border-right: 1px solid #ababab;
    border-bottom: 1px solid #999;
    color: #444;
    font: 17px/26px 'Open Sans', sans-serif;
  }
  thead th.on {
    border-bottom: 2px solid #217346;
    background: #e1e1e1;
    color: #217346;
    font-weight: 700;
  }
  .corner svg {
    margin-left: 17px;
  }
  tbody th {
    padding: 0;
    border-right: 1px solid #999;
    border-bottom: 1px solid #d4d4d4;
    color: #444;
    font: 17px/26px 'Open Sans', sans-serif;
    vertical-align: bottom;
  }
  tbody th.on {
    border-right: 2px solid #217346;
    background: #e1e1e1;
    color: #217346;
    font-weight: 700;
  }
  td {
    position: relative;
    padding: 0;
    border-bottom: 1px solid #d4d4d4;
    text-align: center;
    vertical-align: middle;
    white-space: pre;
  }
  .left,
  .merged,
  .edge {
    border-right: 2px solid #000;
  }
  .merged.selected {
    padding-bottom: 14px;
  }
  tr:nth-child(3) .merged {
    padding-bottom: 6px;
  }
  .result {
    padding-left: 3px;
    text-align: left;
  }
  .selected::before {
    content: '';
    position: absolute;
    inset: -2px -3px -2px -2px;
    border: 2px solid #217346;
  }
  .selected::after {
    content: '';
    position: absolute;
    right: -3px;
    bottom: -3px;
    width: 6px;
    height: 6px;
    border: solid #fff;
    border-width: 1px 0 0 1px;
    background: #217346;
  }
  .next {
    height: 40px;
  }
  .next td:not(.left, .edge) {
    border-right: 1px solid #d4d4d4;
  }
  .v-scroll {
    display: flex;
    flex-direction: column;
    width: 19px;
    margin: 2px 3px 0 3px;
    background: #f2f2f2;
  }
  .v-scroll button,
  .h-scroll button {
    width: 19px;
    height: 19px;
    flex: none;
    border: 1px solid #ababab;
    background: #fff;
  }
  .v-track {
    flex: 1;
    padding-top: 161px;
  }
  .v-thumb {
    height: 142px;
    border: 1px solid #ababab;
    background: #fff;
  }

  /* Sheet tabs */
  .sheet-tabs {
    display: flex;
    height: 29px;
    flex: none;
    border-top: 1px solid #ababab;
    background: #f3f3f3;
    font-size: 16px;
    line-height: 22px;
  }
  .arrows {
    display: flex;
    gap: 23px;
    align-items: center;
    width: 104px;
    padding-left: 28px;
    border-right: 1px solid #ababab;
  }
  .sheet-tabs > button {
    height: 25px;
    padding-bottom: 6px;
    border-right: 1px solid #ababab;
  }
  .s1 { width: 114px; }
  .s2 { width: 158px; }
  .s3 { width: 178px; }
  .s4 { width: 143px; }
  .s5 { width: 95px; }
  .sheet-tabs > .current {
    border-bottom: 2px solid #217346;
    background: #fff;
    color: #217346;
    font-weight: 700;
    padding-bottom: 4px;
  }
  .sheet-tabs > .add {
    width: 86px;
    height: 28px;
    padding: 0;
    border: 0;
  }
  .sheet-tabs .dots {
    align-self: center;
    margin: 0 16px 0 auto;
  }
  .h-scroll {
    display: flex;
    align-items: center;
    width: 38%;
    margin-right: 24px;
  }
  .h-track {
    flex: 1;
    height: 19px;
    padding-left: 54px;
    background: #e8e8e8;
  }
  .h-thumb {
    width: 477px;
    height: 19px;
    border: 1px solid #ababab;
    background: #fff;
  }

  /* Status bar */
  .status {
    display: flex;
    align-items: center;
    height: 27px;
    flex: none;
    padding: 0 9px 0 7px;
    background: #217346;
    color: #fff;
    font-size: 12px;
  }
  .ready {
    flex: 1;
  }
  .view {
    width: 41px;
    height: 25px;
  }
  .current-view {
    background: #0f6232;
  }
  .zoom-btn {
    width: 14px;
    height: 25px;
    margin-left: 2px;
  }
  .status input {
    width: 125px;
    height: 16px;
    margin: 0 2px;
    appearance: none;
    background: linear-gradient(#fff, #fff) center / 100% 1px no-repeat;
  }
  .status input::-webkit-slider-thumb {
    appearance: none;
    width: 5px;
    height: 14px;
    background: #fff;
  }
  .percent {
    margin-left: 16px;
  }

  /* Taskbar */
  .taskbar {
    display: flex;
    height: 50px;
    flex: none;
    background: #000;
    color: #fff;
  }
  .sys {
    width: 60px;
  }
  .apps {
    display: flex;
    margin-left: 3px;
  }
  .apps button {
    position: relative;
    width: 62px;
    height: 50px;
  }
  .run::after {
    content: '';
    position: absolute;
    left: 6px;
    bottom: 0;
    width: 51px;
    height: 3px;
    background: #76b9ed;
  }
  .more-than-one::after {
    background: linear-gradient(90deg, #76b9ed 40px, #4d86b3 40px);
  }
  .apps .alert {
    border-bottom: 3px solid #ff7a00;
    border-right: 1px solid #000;
    background: #a4561b;
  }
  .count {
    position: absolute;
    left: 27px;
    top: 22px;
    width: 20px;
    height: 20px;
    border-radius: 50%;
    background: #d8443c;
    font-size: 13px;
    line-height: 20px;
  }
  .apps .front {
    background: linear-gradient(#000 18px, #333 18px 47px, #76b9ed 47px);
    width: 57px;
    margin: 0 3px 0 2px;
  }
  .dim svg {
    opacity: 0.55;
  }
  .tray {
    display: flex;
    margin-left: auto;
    padding-right: 10px;
    border-right: 1px solid #555;
    margin-right: 5px;
  }
  .tray button {
    width: 30px;
  }
  .tray .lang {
    width: 44px;
  }
  .tray .clock {
    flex-direction: column;
    width: 78px;
    gap: 3px;
  }
  .tray .notes {
    width: 50px;
  }

  /* Translucent window floating over the workbook */
  .ghost-window {
    position: absolute;
    left: 45px;
    top: 31px;
    width: 1245px;
    height: 958px;
    display: flex;
    flex-direction: column;
    border: 1px solid #d5e4f2;
    box-shadow: 0 4px 24px rgba(0, 0, 0, 0.07);
    pointer-events: none;
  }
  .ghost-title {
    display: flex;
    justify-content: flex-end;
    gap: 44px;
    height: 56px;
    padding: 11px 23px 0 0;
    background: rgba(255, 255, 255, 0.18);
  }
  .ghost-body {
    flex: 1;
    background: rgba(0, 0, 0, 0.145);
  }
</style>
